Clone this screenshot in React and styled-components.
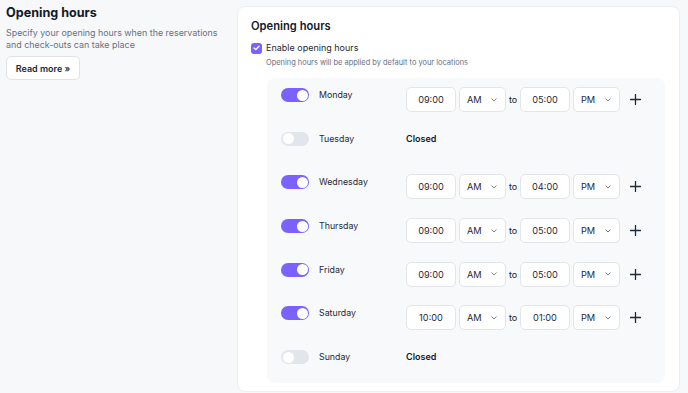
import React from "react";
import styled, { createGlobalStyle } from "styled-components";

const Global = createGlobalStyle`
  * { box-sizing: border-box; }
  html, body { margin: 0; padding: 0; background: #f7f8fa; }
  body { font-family: Inter, "Noto Sans", sans-serif; color: #111827; }
`;

const Page = styled.div`
  display: flex;
  gap: 12px;
  padding: 6px 8px 0 6px;
  height: 393px;
  overflow: hidden;
`;

const Side = styled.div`
  width: 219px;
  flex-shrink: 0;
`;

const SideTitle = styled.h1`
  margin: 0;
  font-size: 12.6px;
  line-height: 14px;
  font-weight: 700;
  color: #111827;
`;

const SideText = styled.p`
  margin: 7px 0 0;
  font-size: 8.9px;
  line-height: 12px;
  color: #667085;
`;

const OutlineButton = styled.button`
  display: block;
  margin-top: 5px;
  height: 24px;
  width: 74px;
  border: 1px solid #dfe2e8;
  border-radius: 5px;
  background: #fff;
  font-family: inherit;
  font-size: 9px;
  font-weight: 600;
  color: #1f2937;
  padding: 0;
`;

const Card = styled.section`
  flex: 1;
  background: #fff;
  border: 1px solid #eceef2;
  border-radius: 8px;
  padding: 11px 14px 9px 13px;
  height: 386px;
`;

const CardTitle = styled.h2`
  margin: 0;
  font-size: 11.2px;
  line-height: 16px;
  font-weight: 600;
  color: #111827;
`;

const CheckRow = styled.label`
  margin-top: 8px;
  display: flex;
  align-items: center;
  gap: 4px;
  font-size: 9px;
  color: #1f2937;
  line-height: 12px;
`;

const CheckBox = styled.span`
  width: 11px;
  height: 11px;
  border-radius: 3px;
  background: #7b61ff;
  display: inline-flex;
  align-items: center;
  justify-content: center;
`;

const Hint = styled.div`
  margin: 4px 0 0 15px;
  font-size: 7.45px;
  line-height: 10px;
  color: #667085;
`;

const Panel = styled.div`
  margin: 10px 0 0 16px;
  background: #f8f9fb;
  border-radius: 8px;
  padding: 9px 14px 9px;
  display: flex;
  flex-direction: column;
  gap: 18.7px;
`;

const Row = styled.div`
  display: flex;
  align-items: flex-start;
  height: 25px;
`;

const Toggle = styled.span`
  margin-top: 1px;
  width: 28px;
  height: 14px;
  border-radius: 8px;
  background: ${(p) => (p.$on ? "#7b61ff" : "#e2e6ec")};
  position: relative;
  flex-shrink: 0;
  &::after {
    content: "";
    position: absolute;
    top: 1.5px;
    left: ${(p) => (p.$on ? "15.5px" : "1.5px")};
    width: 11px;
    height: 11px;
    border-radius: 50%;
    background: #fff;
  }
`;

const DayName = styled.span`
  width: 87px;
  margin-left: 10px;
  font-size: 8.8px;
  line-height: 16px;
  color: #1f2937;
  flex-shrink: 0;
`;

const Closed = styled.span`
  font-size: 9px;
  line-height: 16px;
  font-weight: 600;
  color: #111827;
`;

const Times = styled.div`
  display: flex;
  align-items: center;
  gap: 3px;
`;

const TimeBox = styled.div`
  width: 50px;
  height: 25px;
  border: 1px solid #e2e5ea;
  border-radius: 5px;
  background: #fff;
  display: flex;
  align-items: center;
  justify-content: center;
  font-size: 9.2px;
  color: #1f2937;
`;

const Select = styled.div`
  width: 47px;
  height: 25px;
  border: 1px solid #e2e5ea;
  border-radius: 5px;
  background: #fff;
  display: flex;
  align-items: center;
  justify-content: space-between;
  padding: 0 8px 0 7px;
  font-size: 9.2px;
  color: #1f2937;
`;

const To = styled.span`
  font-size: 9px;
  color: #111827;
  width: 8px;
`;

const AddBtn = styled.span`
  margin-left: 5px;
  width: 14px;
  display: inline-flex;
  align-items: center;
  justify-content: center;
`;

const Chevron = () => (
  <svg width="6" height="4" viewBox="0 0 6 4" fill="none">
    <path d="M0.8 0.8 L3 3 L5.2 0.8" stroke="#6b7280" strokeWidth="0.9" strokeLinecap="round" strokeLinejoin="round" />
  </svg>
);

const Plus = () => (
  <svg width="11" height="11" viewBox="0 0 11 11">
    <path d="M5.5 0.5 V10.5 M0.5 5.5 H10.5" stroke="#1f2937" strokeWidth="1.3" strokeLinecap="round" />
  </svg>
);

const days = [
  { name: "Monday", on: true, from: "09:00", to: "05:00" },
  { name: "Tuesday", on: false },
  { name: "Wednesday", on: true, from: "09:00", to: "04:00" },
  { name: "Thursday", on: true, from: "09:00", to: "05:00" },
  { name: "Friday", on: true, from: "09:00", to: "05:00" },
  { name: "Saturday", on: true, from: "10:00", to: "01:00" },
  { name: "Sunday", on: false },
];

export default function App() {
  return (
    <>
      <Global />
      <Page>
        <Side>
          <SideTitle>Opening hours</SideTitle>
          <SideText>
            Specify your opening hours when the reservations and check-outs can take place
          </SideText>
          <OutlineButton>Read more »</OutlineButton>
        </Side>
        <Card>
          <CardTitle>Opening hours</CardTitle>
          <CheckRow>
            <CheckBox>
              <svg width="7" height="6" viewBox="0 0 7 6" fill="none">
                <path d="M1 3 L2.8 4.6 L6 1.2" stroke="#fff" strokeWidth="1.3" strokeLinecap="round" strokeLinejoin="round" />
              </svg>
            </CheckBox>
            Enable opening hours
          </CheckRow>
          <Hint>Opening hours will be applied by default to your locations</Hint>
          <Panel>
            {days.map((d) => (
              <Row key={d.name}>
                <Toggle $on={d.on} />
                <DayName>{d.name}</DayName>
                {d.on ? (
                  <Times>
                    <TimeBox>{d.from}</TimeBox>
                    <Select>
                      AM <Chevron />
                    </Select>
                    <To>to</To>
                    <TimeBox>{d.to}</TimeBox>
                    <Select>
                      PM <Chevron />
                    </Select>
                    <AddBtn>
                      <Plus />
                    </AddBtn>
                  </Times>
                ) : (
                  <Closed>Closed</Closed>
                )}
              </Row>
            ))}
          </Panel>
        </Card>
      </Page>
    </>
  );
}
